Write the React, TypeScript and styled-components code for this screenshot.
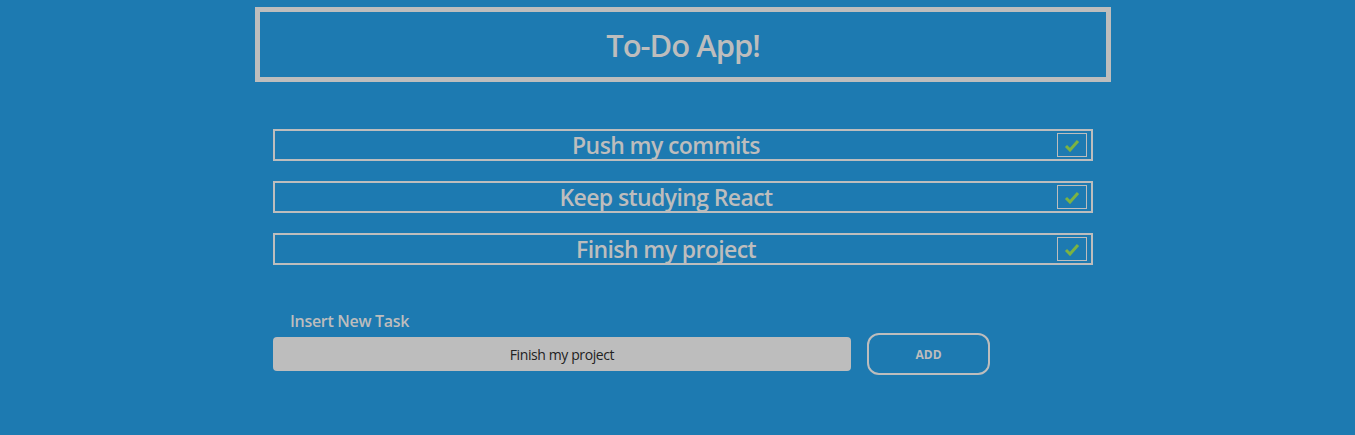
import React, { useState } from 'react';
import styled, { createGlobalStyle } from 'styled-components';

const GREY = '#bdbdbd';

const GlobalStyle = createGlobalStyle`
  html, body {
    margin: 0;
    padding: 0;
    background: #1d7ab1;
    font-family: 'Open Sans', 'Noto Sans', sans-serif;
  }
`;

const Page = styled.div`
  width: 1355px;
  height: 435px;
  padding-top: 7px;
  box-sizing: border-box;
`;

const Header = styled.header`
  margin-left: 255px;
  width: 856px;
  height: 75px;
  box-sizing: border-box;
  border: 5px solid ${GREY};
  display: flex;
  align-items: center;
  justify-content: center;
`;

const Title = styled.h1`
  margin: 0;
  color: ${GREY};
  font-size: 31px;
  font-weight: 600;
  letter-spacing: -1px;
`;

const TaskList = styled.ul`
  list-style: none;
  margin: 47px 0 0 273px;
  padding: 0;
  width: 820px;
  display: flex;
  flex-direction: column;
  gap: 20px;
`;

const TaskRow = styled.li`
  height: 32px;
  box-sizing: border-box;
  border: 2px solid ${GREY};
  padding-right: 4px;
  display: flex;
  align-items: center;
`;

const TaskText = styled.span`
  flex: 1;
  text-align: center;
  color: ${GREY};
  font-size: 23px;
  font-weight: 600;
  letter-spacing: -0.6px;
`;

const Check = styled.span<{ $done: boolean }>`
  width: 30px;
  height: 24px;
  box-sizing: border-box;
  border: 1px solid ${GREY};
  display: flex;
  align-items: center;
  justify-content: center;
  opacity: ${(p) => (p.$done ? 1 : 0.6)};
`;

const Form = styled.form`
  margin: 45px 0 0 273px;
  display: flex;
  align-items: flex-end;
  gap: 16px;
`;

const Field = styled.div`
  display: flex;
  flex-direction: column;
`;

const Label = styled.label`
  color: ${GREY};
  font-size: 16px;
  font-weight: 600;
  margin: 0 0 5px 17px;
  letter-spacing: -0.3px;
`;

const Input = styled.input`
  width: 578px;
  height: 34px;
  box-sizing: border-box;
  border: none;
  border-radius: 4px;
  background: ${GREY};
  color: #222;
  font-family: 'Open Sans', 'Noto Sans', sans-serif;
  font-size: 14px;
  text-align: center;
  letter-spacing: -0.4px;
  outline: none;
`;

const AddButton = styled.button`
  width: 123px;
  height: 42px;
  margin-bottom: -4px;
  box-sizing: border-box;
  border: 2px solid ${GREY};
  border-radius: 12px;
  background: transparent;
  color: ${GREY};
  font-family: 'Open Sans', 'Noto Sans', sans-serif;
  font-size: 12px;
  font-weight: 700;
`;

const CheckIcon = () => (
  <svg width="16" height="13" viewBox="0 0 16 13">
    <path d="M2 7 L6 11 L14 2" fill="none" stroke="#7cb342" strokeWidth="3" />
  </svg>
);

const initialTasks = [
  { text: 'Push my commits', done: true },
  { text: 'Keep studying React', done: true },
  { text: 'Finish my project', done: true },
];

const App = () => {
  const [tasks, setTasks] = useState(initialTasks);
  const [value, setValue] = useState('Finish my project');

  return (
    <Page>
      <GlobalStyle />
      <Header>
        <Title>To-Do App!</Title>
      </Header>
      <TaskList>
        {tasks.map((t, i) => (
          <TaskRow key={i}>
            <TaskText>{t.text}</TaskText>
            <Check $done={t.done}>{t.done && <CheckIcon />}</Check>
          </TaskRow>
        ))}
      </TaskList>
      <Form
        onSubmit={(e) => {
          e.preventDefault();
          if (value) setTasks([...tasks, { text: value, done: false }]);
        }}
      >
        <Field>
          <Label>Insert New Task</Label>
          <Input value={value} onChange={(e) => setValue(e.target.value)} />
        </Field>
        <AddButton type="submit">ADD</AddButton>
      </Form>
    </Page>
  );
};

export default App;
